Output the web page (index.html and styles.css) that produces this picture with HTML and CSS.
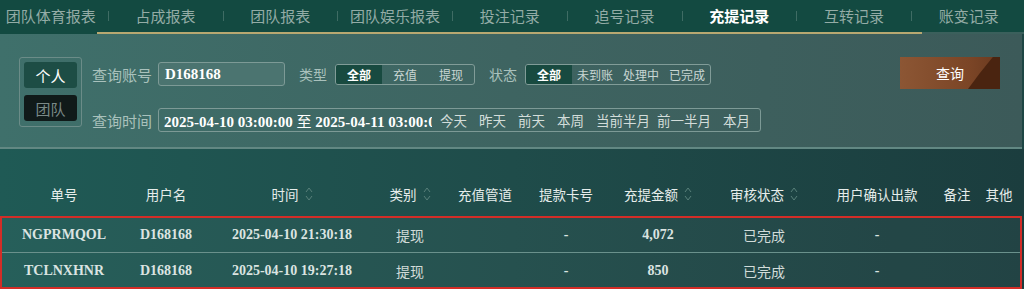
FILE: index.html
```html
<!DOCTYPE html>
<html lang="zh-CN">
<head>
    <meta charset="UTF-8">
    <meta name="viewport" content="width=device-width, initial-scale=1.0">
    <title>充提记录</title>
    <link rel="stylesheet" href="styles.css">
</head>
<body>
    <div class="nav">
        <span class="tab">团队体育报表</span><span class="sep"></span>
        <span class="tab">占成报表</span><span class="sep"></span>
        <span class="tab">团队报表</span><span class="sep"></span>
        <span class="tab">团队娱乐报表</span><span class="sep"></span>
        <span class="tab">投注记录</span><span class="sep"></span>
        <span class="tab">追号记录</span><span class="sep"></span>
        <span class="tab active">充提记录</span><span class="sep"></span>
        <span class="tab">互转记录</span><span class="sep"></span>
        <span class="tab">账变记录</span>
    </div>
    <div class="nav-line"></div>

    <div class="panel">
        <div class="scope">
            <button class="scope-btn on">个人</button>
            <button class="scope-btn">团队</button>
        </div>
        <div class="fields">
            <div class="row">
                <span class="label">查询账号</span>
                <div class="input">D168168</div>
                <span class="label gap-l">类型</span>
                <div class="seg">
                    <span class="seg-item on">全部</span>
                    <span class="seg-item">充值</span>
                    <span class="seg-item">提现</span>
                </div>
                <span class="label gap-l">状态</span>
                <div class="seg">
                    <span class="seg-item on">全部</span>
                    <span class="seg-item">未到账</span>
                    <span class="seg-item">处理中</span>
                    <span class="seg-item">已完成</span>
                </div>
            </div>
            <div class="row row2">
                <span class="label">查询时间</span>
                <div class="date-box">
                    <div class="date-text">2025-04-10 03:00:00 <span class="cjk">至</span> 2025-04-11 03:00:00</div>
                    <span class="quick">今天</span>
                    <span class="quick">昨天</span>
                    <span class="quick">前天</span>
                    <span class="quick">本周</span>
                    <span class="quick">当前半月</span>
                    <span class="quick tight">前一半月</span>
                    <span class="quick">本月</span>
                </div>
            </div>
        </div>
        <button class="search">查询</button>
    </div>

    <div class="table">
        <div class="grid head">
            <span>单号</span>
            <span>用户名</span>
            <span>时间 <svg class="sort" viewBox="0 0 8 16"><path d="M1 6 L4 2 L7 6 M1 10 L4 14 L7 10" fill="none" stroke="#58807a" stroke-width="1"/></svg></span>
            <span>类别 <svg class="sort" viewBox="0 0 8 16"><path d="M1 6 L4 2 L7 6 M1 10 L4 14 L7 10" fill="none" stroke="#58807a" stroke-width="1"/></svg></span>
            <span>充值管道</span>
            <span>提款卡号</span>
            <span>充提金额 <svg class="sort" viewBox="0 0 8 16"><path d="M1 6 L4 2 L7 6 M1 10 L4 14 L7 10" fill="none" stroke="#58807a" stroke-width="1"/></svg></span>
            <span>审核状态 <svg class="sort" viewBox="0 0 8 16"><path d="M1 6 L4 2 L7 6 M1 10 L4 14 L7 10" fill="none" stroke="#58807a" stroke-width="1"/></svg></span>
            <span>用户确认出款</span>
            <span>备注</span>
            <span>其他</span>
        </div>
        <div class="rows">
            <div class="grid row-data">
                <span class="num">NGPRMQOL</span>
                <span class="num">D168168</span>
                <span class="num">2025-04-10 21:30:18</span>
                <span class="txt">提现</span>
                <span></span>
                <span class="num">-</span>
                <span class="num">4,072</span>
                <span class="txt">已完成</span>
                <span class="num">-</span>
                <span></span>
                <span></span>
            </div>
            <div class="grid row-data last">
                <span class="num">TCLNXHNR</span>
                <span class="num">D168168</span>
                <span class="num">2025-04-10 19:27:18</span>
                <span class="txt">提现</span>
                <span></span>
                <span class="num">-</span>
                <span class="num">850</span>
                <span class="txt">已完成</span>
                <span class="num">-</span>
                <span></span>
                <span></span>
            </div>
        </div>
    </div>
</body>
</html>
```

FILE: styles.css
```css
body {
    margin: 0;
    width: 1024px;
    height: 289px;
    overflow: hidden;
    font-family: "Noto Sans CJK SC", "Noto Sans", sans-serif;
    background: #1d4644;
}
.nav {
    display: flex;
    align-items: center;
    height: 32px;
    background: #134a41;
    margin-left: -6px;
}
.tab {
    flex: none;
    width: 113.75px;
    text-align: center;
    font-size: 15px;
    color: #93aca6;
    line-height: 20px;
}
.tab.active {
    color: #ffffff;
    font-weight: bold;
}
.sep {
    flex: none;
    width: 1px;
    height: 10px;
    background: #3f6c64;
}
.nav-line {
    height: 2px;
    background: #134a41;
    background-image: linear-gradient(90deg, #134a41 97px, #b8a871 97px, #b8a871 922px, #3b605c 922px);
}
.panel {
    display: flex;
    align-items: flex-start;
    height: 115px;
    padding: 23px 22px 0 19px;
    box-sizing: border-box;
    background: linear-gradient(90deg, #3f706b 0%, #3e6461 50%, #3c5a59 100%);
    border-bottom: 2px solid #628883;
    margin-right: 2px;
}
.scope {
    display: flex;
    flex-direction: column;
    gap: 7px;
    width: 63px;
    height: 70px;
    padding: 4px;
    box-sizing: border-box;
    border: 1px solid #6b8c88;
    border-radius: 3px;
}
.scope-btn {
    height: 26px;
    border: none;
    border-radius: 3px;
    font-family: inherit;
    font-size: 15px;
    padding: 0;
    background: #101a19;
    color: #7a8987;
}
.scope-btn.on {
    background: #1d4d45;
    color: #ffffff;
}
.fields {
    display: flex;
    flex-direction: column;
    gap: 22px;
    margin-left: 10px;
    margin-top: 5px;
}
.row {
    display: flex;
    align-items: center;
    height: 24px;
}
.label {
    font-size: 15px;
    color: #a9c1bc;
    margin-right: 6px;
    white-space: nowrap;
}
.gap-l {
    font-size: 14px;
    margin-left: 14px;
    margin-right: 8px;
}
.input {
    width: 127px;
    height: 24px;
    box-sizing: border-box;
    border: 1px solid #7d9a96;
    border-radius: 3px;
    background: #4b7470;
    color: #ffffff;
    font-family: "Liberation Serif", serif;
    font-weight: bold;
    font-size: 15px;
    line-height: 22px;
    padding-left: 6px;
}
.seg {
    display: flex;
    height: 21px;
    box-sizing: border-box;
    border: 1px solid #819c98;
    border-radius: 3px;
    overflow: hidden;
}
.seg-item {
    width: 46px;
    text-align: center;
    font-size: 12px;
    line-height: 19px;
    color: #c9d6d3;
}
.seg-item.on {
    background: #184a40;
    color: #ffffff;
    font-weight: bold;
}
.date-box {
    display: flex;
    align-items: center;
    width: 603px;
    height: 24px;
    box-sizing: border-box;
    border: 1px solid #7d9a96;
    border-radius: 3px;
    padding-left: 5px;
}
.date-text {
    flex: none;
    width: 268px;
    overflow: hidden;
    white-space: nowrap;
    font-family: "Liberation Serif", serif;
    font-weight: bold;
    font-size: 15px;
    color: #ffffff;
}
.cjk {
    font-family: "Noto Sans CJK SC", sans-serif;
    font-weight: normal;
}
.quick {
    font-size: 13.5px;
    color: #d3ddda;
    margin-left: 12px;
    white-space: nowrap;
}
.quick:first-of-type {
    margin-left: 8px;
}
.quick.tight {
    margin-left: 7px;
}
.search {
    position: relative;
    margin-left: auto;
    width: 100px;
    height: 32px;
    border: none;
    padding: 0;
    font-family: inherit;
    font-size: 14px;
    color: #ffffff;
    background: linear-gradient(90deg, #8c5634 0%, #7b4526 70%, #6a3a1f 100%);
    overflow: hidden;
}
.search::after {
    content: "";
    position: absolute;
    right: 0;
    top: 0;
    width: 34px;
    height: 32px;
    background: #4a2410;
    clip-path: polygon(79% 0, 100% 0, 100% 100%, 6% 100%, 41% 50%);
}
.table {
    height: 139px;
    background: linear-gradient(90deg, #1f5a55 0%, #1f4c4a 50%, #1b3d3e 100%);
    padding-top: 28px;
    box-sizing: border-box;
}
.grid {
    display: grid;
    grid-template-columns: 124px 80px 172px 64px 86px 76px 108px 104px 122px 38px 46px;
    align-items: center;
    text-align: center;
}
.head {
    height: 34px;
    padding-left: 2px;
    font-size: 13.5px;
    color: #e6edeb;
}
.head span {
    display: flex;
    align-items: center;
    justify-content: center;
    gap: 6px;
}
.sort {
    width: 8px;
    height: 16px;
}
.rows {
    margin-top: 5px;
    width: 1022px;
    box-sizing: border-box;
    border: 2px solid #d32d27;
    background: rgba(255, 255, 255, 0.03);
}
.row-data {
    height: 34px;
    border-bottom: 1px solid #6a918c;
}
.row-data.last {
    height: 32px;
    border-bottom: none;
    padding-top: 2px;
}
.num {
    font-family: "Liberation Serif", serif;
    font-weight: bold;
    font-size: 14px;
    color: #dbe4e1;
}
.txt {
    font-size: 14px;
    color: #d2dcd9;
}
```
